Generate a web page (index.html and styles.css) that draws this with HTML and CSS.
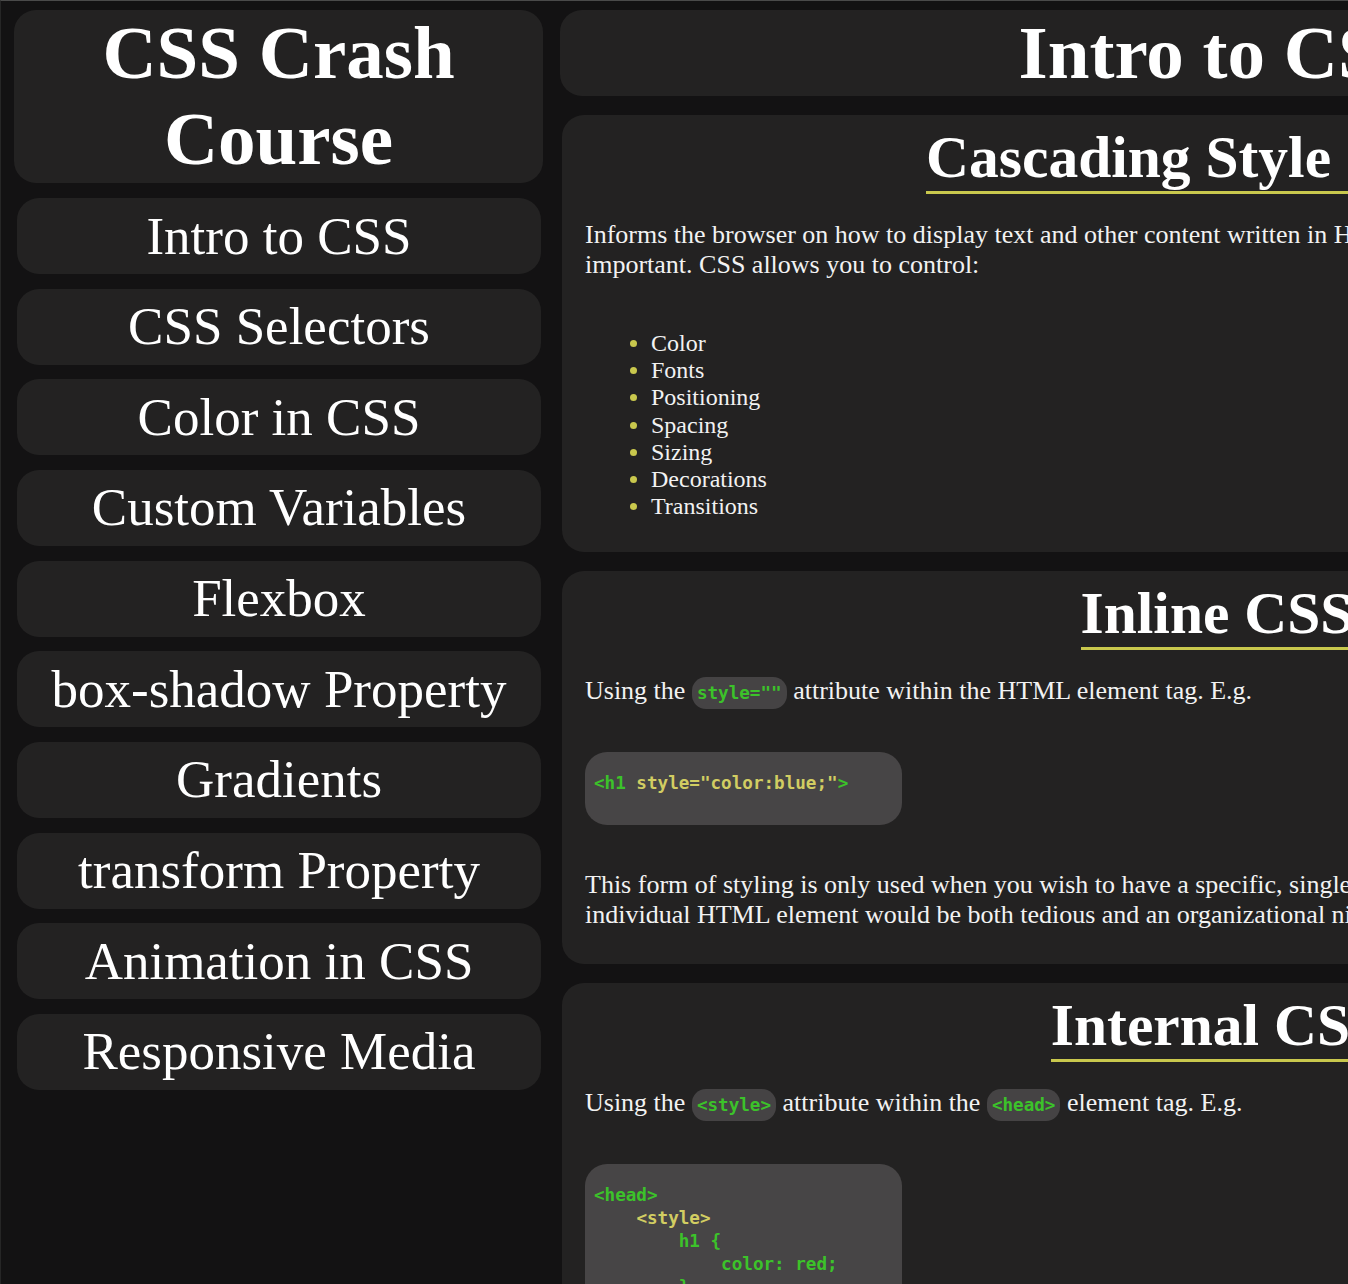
FILE: index.html
```html
<!DOCTYPE html>
<html lang="en">
<head>
<meta charset="utf-8">
<title>CSS Crash Course</title>
<link rel="stylesheet" href="styles.css">
</head>
<body>
<div class="page">
  <aside class="sidebar">
    <div class="brand"><h1>CSS Crash Course</h1></div>
    <nav class="nav">
      <a class="nav-item" href="#intro">Intro to CSS</a>
      <a class="nav-item" href="#selectors">CSS Selectors</a>
      <a class="nav-item" href="#color">Color in CSS</a>
      <a class="nav-item" href="#vars">Custom Variables</a>
      <a class="nav-item" href="#flex">Flexbox</a>
      <a class="nav-item" href="#shadow">box-shadow Property</a>
      <a class="nav-item" href="#gradients">Gradients</a>
      <a class="nav-item" href="#transform">transform Property</a>
      <a class="nav-item" href="#anim">Animation in CSS</a>
      <a class="nav-item" href="#media">Responsive Media</a>
    </nav>
  </aside>
  <main class="main" id="intro">
    <header class="page-head"><h1>Intro to CSS</h1></header>

    <section class="card">
      <div class="card-head"><h2>Cascading Style Sheets</h2></div>
      <p>Informs the browser on how to display text and other content written in HTML, which is why it is considered to be very important. CSS allows you to control:</p>
      <ul class="bullets">
        <li>Color</li>
        <li>Fonts</li>
        <li>Positioning</li>
        <li>Spacing</li>
        <li>Sizing</li>
        <li>Decorations</li>
        <li>Transitions</li>
      </ul>
    </section>

    <section class="card">
      <div class="card-head"><h2>Inline CSS</h2></div>
      <p>Using the <code class="pill">style=""</code> attribute within the HTML element tag. E.g.</p>
      <pre class="code"><span class="g">&lt;h1</span><span class="y"> style="color:blue;"</span><span class="g">&gt;</span></pre>
      <p>This form of styling is only used when you wish to have a specific, single element styled differently, as styling each individual HTML element would be both tedious and an organizational nightmare.</p>
    </section>

    <section class="card">
      <div class="card-head"><h2>Internal CSS</h2></div>
      <p>Using the <code class="pill">&lt;style&gt;</code> attribute within the <code class="pill">&lt;head&gt;</code> element tag. E.g.</p>
      <pre class="code"><span class="g">&lt;head&gt;</span>
    <span class="y">&lt;style&gt;</span>
        <span class="g">h1 {</span>
            <span class="g">color: red;</span>
        <span class="g">}</span>
    <span class="y">&lt;/style&gt;</span>
<span class="g">&lt;/head&gt;</span></pre>
      <p>This is useful when a single page needs its own unique styles.</p>
    </section>
  </main>
</div>
</body>
</html>
```

FILE: styles.css
```css
html {
  overflow: hidden;
  background: #131213;
  border-top: 1px solid #4a4a4a;
  border-left: 1px solid #262626;
}

body {
  margin: 0;
  overflow: hidden;
  background: #131213;
  color: #ffffff;
  font-family: "Liberation Serif", "Times New Roman", serif;
}

.page {
  display: grid;
  grid-template-columns: 529px 1320px;
  column-gap: 17px;
  align-items: start;
  padding: 9px 0 0 13px;
  width: max-content;
}

.sidebar {
  display: flex;
  flex-direction: column;
}

.brand {
  padding-bottom: 1px;
  background: #232222;
  border-radius: 22px;
  text-align: center;
}

.brand h1 {
  margin: 0;
  font-size: 75px;
  line-height: 86px;
  font-weight: bold;
}

.nav {
  display: flex;
  flex-direction: column;
  gap: 14.67px;
  margin-top: 15px;
}

.nav-item {
  display: block;
  margin: 0 2px 0 3px;
  padding: 7.5px 0;
  background: #232222;
  border-radius: 22px;
  color: #ffffff;
  text-decoration: none;
  text-align: center;
  font-size: 53px;
  line-height: 61px;
}

.main {
  display: flex;
  flex-direction: column;
  gap: 19px;
}

.page-head {
  background: #232222;
  border-radius: 22px;
  text-align: center;
}

.page-head h1 {
  margin: 0;
  font-size: 75px;
  line-height: 86px;
  font-weight: bold;
}

.card {
  margin: 0 8px 0 2px;
  padding: 8px 23px 8px;
  background: #232222;
  border-radius: 22px;
}

.card-head {
  text-align: center;
}

.card-head h2 {
  display: inline-block;
  margin: 0;
  font-size: 59.5px;
  line-height: 68px;
  font-weight: bold;
  border-bottom: 3px solid #c9c84d;
}

.card p {
  margin: 26px 0;
  font-size: 26px;
  line-height: 30px;
  color: #f2f2f2;
}

.bullets {
  margin: 50px 0 24px;
  padding-left: 66px;
  font-size: 24px;
  line-height: 27.2px;
  color: #f2f2f2;
}

.bullets li::marker {
  color: #c9c84d;
}

.pill {
  display: inline-block;
  padding: 4px 5px;
  background: #454344;
  border-radius: 14px;
  color: #3cc22a;
  font-family: "DejaVu Sans Mono", "Liberation Mono", monospace;
  font-weight: bold;
  font-size: 17.6px;
  line-height: 24px;
  vertical-align: middle;
}

.code {
  width: 300px;
  margin: 43px 0 45px;
  padding: 20px 8px 30px 9px;
  background: #474546;
  border-radius: 22px;
  font-family: "DejaVu Sans Mono", "Liberation Mono", monospace;
  font-weight: bold;
  font-size: 17.6px;
  line-height: 23px;
  overflow: hidden;
}

.code .g {
  color: #3cc22a;
}

.code .y {
  color: #d2cd62;
}
```
